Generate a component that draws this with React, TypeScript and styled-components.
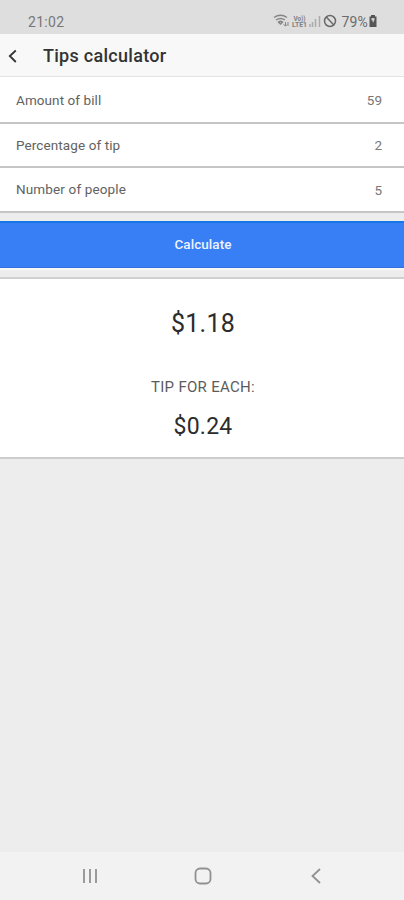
import React from "react";
import styled, { createGlobalStyle } from "styled-components";

const GlobalStyle = createGlobalStyle`
  * { box-sizing: border-box; }
  body { margin: 0; background: #ededed; font-family: Roboto, "Liberation Sans", sans-serif; }
`;

const Screen = styled.div`
  display: flex;
  flex-direction: column;
  width: 100%;
  height: 900px;
  background: #ededed;
  overflow: hidden;
`;

const StatusBar = styled.div`
  display: flex;
  justify-content: space-between;
  height: 34px;
  padding: 9px 26px 0 28px;
  background: #dedede;
  color: #777;
  font-size: 14px;
  line-height: 26px;
`;

const Clock = styled.span`
  letter-spacing: 0.3px;
`;

const StatusIcons = styled.div`
  display: flex;
  height: 26px;
`;

const Battery = styled.span`
  margin-left: 2px;
  color: #6c6c6c;
  letter-spacing: 0.2px;
`;

const Header = styled.header`
  display: flex;
  align-items: center;
  height: 43px;
  padding: 1px 0 0 8px;
  background: #f8f8f8;
  border-bottom: 1px solid #e4e4e4;
`;

const Title = styled.h1`
  margin: 0 0 0 25px;
  color: #333;
  font-size: 18px;
  font-weight: 500;
  line-height: 24px;
  letter-spacing: 0.28px;
`;

const Form = styled.div`
  padding-top: 1px;
  background: #fff;
`;

const Row = styled.label<{ $height: number }>`
  display: flex;
  justify-content: space-between;
  align-items: center;
  height: ${(p) => p.$height}px;
  padding: 0 21px 1px 16px;
  border-bottom: 2px solid #c4c6c6;
  color: #626262;
  font-size: 13.5px;
`;

const Label = styled.span<{ $spacing: number }>`
  letter-spacing: ${(p) => p.$spacing}px;
`;

const Value = styled.span`
  padding: 1px 1px 0 0;
  color: #777;
  font-size: 13.5px;
`;

const CalculateButton = styled.button`
  height: 47px;
  margin: 8px 0 9px;
  padding: 0 0 3px 2px;
  border: 0;
  border-top: 2px solid #1877e8;
  border-bottom: 1px solid #346fdb;
  background: #387ef5;
  box-shadow: 0 2px 0 #f8f8f8;
  color: #edf3ff;
  font: 500 13.5px Roboto, sans-serif;
  letter-spacing: 0.05px;
`;

const Results = styled.section`
  display: flex;
  flex-direction: column;
  align-items: center;
  height: 182px;
  padding-top: 30px;
  border-top: 2px solid #d0d0d0;
  border-bottom: 2px solid #cdcdcd;
  background: #fff;
`;

const Amount = styled.div<{ $size: number }>`
  color: #2c2c2c;
  font-size: ${(p) => p.$size}px;
  line-height: 30px;
  letter-spacing: 0.2px;
  padding-left: 2px;
`;

const Caption = styled.div`
  margin: 38px 0 15px;
  padding-left: 2px;
  color: #5c5c5c;
  font-size: 15px;
  line-height: 20px;
  letter-spacing: 0.3px;
`;

const NavBar = styled.nav`
  display: grid;
  grid-template-columns: repeat(3, 113px);
  justify-content: center;
  justify-items: center;
  align-items: center;
  height: 48px;
  margin-top: auto;
  padding-left: 2px;
  background: #f2f2f2;
`;

const fields = [
  { label: "Amount of bill", value: 59, height: 46, spacing: 0.08 },
  { label: "Percentage of tip", value: 2, height: 44, spacing: 0.1 },
  { label: "Number of people", value: 5, height: 45, spacing: 0.14 },
];

function SignalIcons() {
  return (
    <svg width="66" height="26" viewBox="0 0 66 26" fill="none">
      <g stroke="#858585" strokeWidth="1.5">
        <path d="M1 8.500Q7.500 4 14 8.500M3 11Q7.500 8 12 11M5.500 13Q7.500 11.500 9.500 13L7.500 15Z" />
        <path d="M12.500 13v4M15 17v-4M10.500 15.500l2 1.500 1.500-1.500" strokeWidth="1" />
      </g>
      <g fill="#808080" fontFamily="Roboto, sans-serif" fontWeight="700">
        <text x="20.500" y="11.500" fontSize="6.500" textLength="12" lengthAdjust="spacingAndGlyphs">Vo))</text>
        <text x="19" y="18" fontSize="6.500" textLength="15" lengthAdjust="spacingAndGlyphs">LTE1</text>
      </g>
      <path d="M37 18v-3M39.500 18v-5M42.500 18V10M46.500 18V7" stroke="#aaa" strokeWidth="1.500" />
      <circle cx="57" cy="12" r="5.500" stroke="#696969" strokeWidth="1.500" />
      <path d="M53.300 8l7.500 8" stroke="#696969" strokeWidth="1.500" />
    </svg>
  );
}

function BatteryIcon() {
  return (
    <svg width="10" height="26" viewBox="0 0 10 26">
      <path d="M3 6h4v1.500h1.500V18h-7V7.500H3z" fill="#555" />
      <path d="M3.500 9h3v2L5 14l-.5-2.500h-1z" fill="#ccc" />
    </svg>
  );
}

export default function App() {
  return (
    <>
      <GlobalStyle />
      <Screen>
        <StatusBar>
          <Clock>21:02</Clock>
          <StatusIcons>
            <SignalIcons />
            <Battery>79%</Battery>
            <BatteryIcon />
          </StatusIcons>
        </StatusBar>
        <Header>
          <svg width="10" height="16" viewBox="0 0 10 16" fill="none">
            <path d="M7.800 2.500L1.800 8l6 6" stroke="#333" strokeWidth="1.800" />
          </svg>
          <Title>Tips calculator</Title>
        </Header>
        <Form>
          {fields.map((f) => (
            <Row key={f.label} $height={f.height}>
              <Label $spacing={f.spacing}>{f.label}</Label>
              <Value>{f.value}</Value>
            </Row>
          ))}
        </Form>
        <CalculateButton>Calculate</CalculateButton>
        <Results>
          <Amount $size={25}>$1.18</Amount>
          <Caption>TIP FOR EACH:</Caption>
          <Amount $size={23}>$0.24</Amount>
        </Results>
        <NavBar>
          <svg width="18" height="18" viewBox="0 0 18 18" fill="none">
            <path d="M3 2v14M9 2v14M15 2v14" stroke="#919191" strokeWidth="1.800" />
          </svg>
          <svg width="18" height="18" viewBox="0 0 18 18" fill="none">
            <rect x="1.500" y="1.500" width="15" height="15" rx="4.500" stroke="#919191" strokeWidth="1.800" />
          </svg>
          <svg width="18" height="18" viewBox="0 0 18 18" fill="none">
            <path d="M13 2L5.500 9l7.500 7" stroke="#919191" strokeWidth="1.800" />
          </svg>
        </NavBar>
      </Screen>
    </>
  );
}
